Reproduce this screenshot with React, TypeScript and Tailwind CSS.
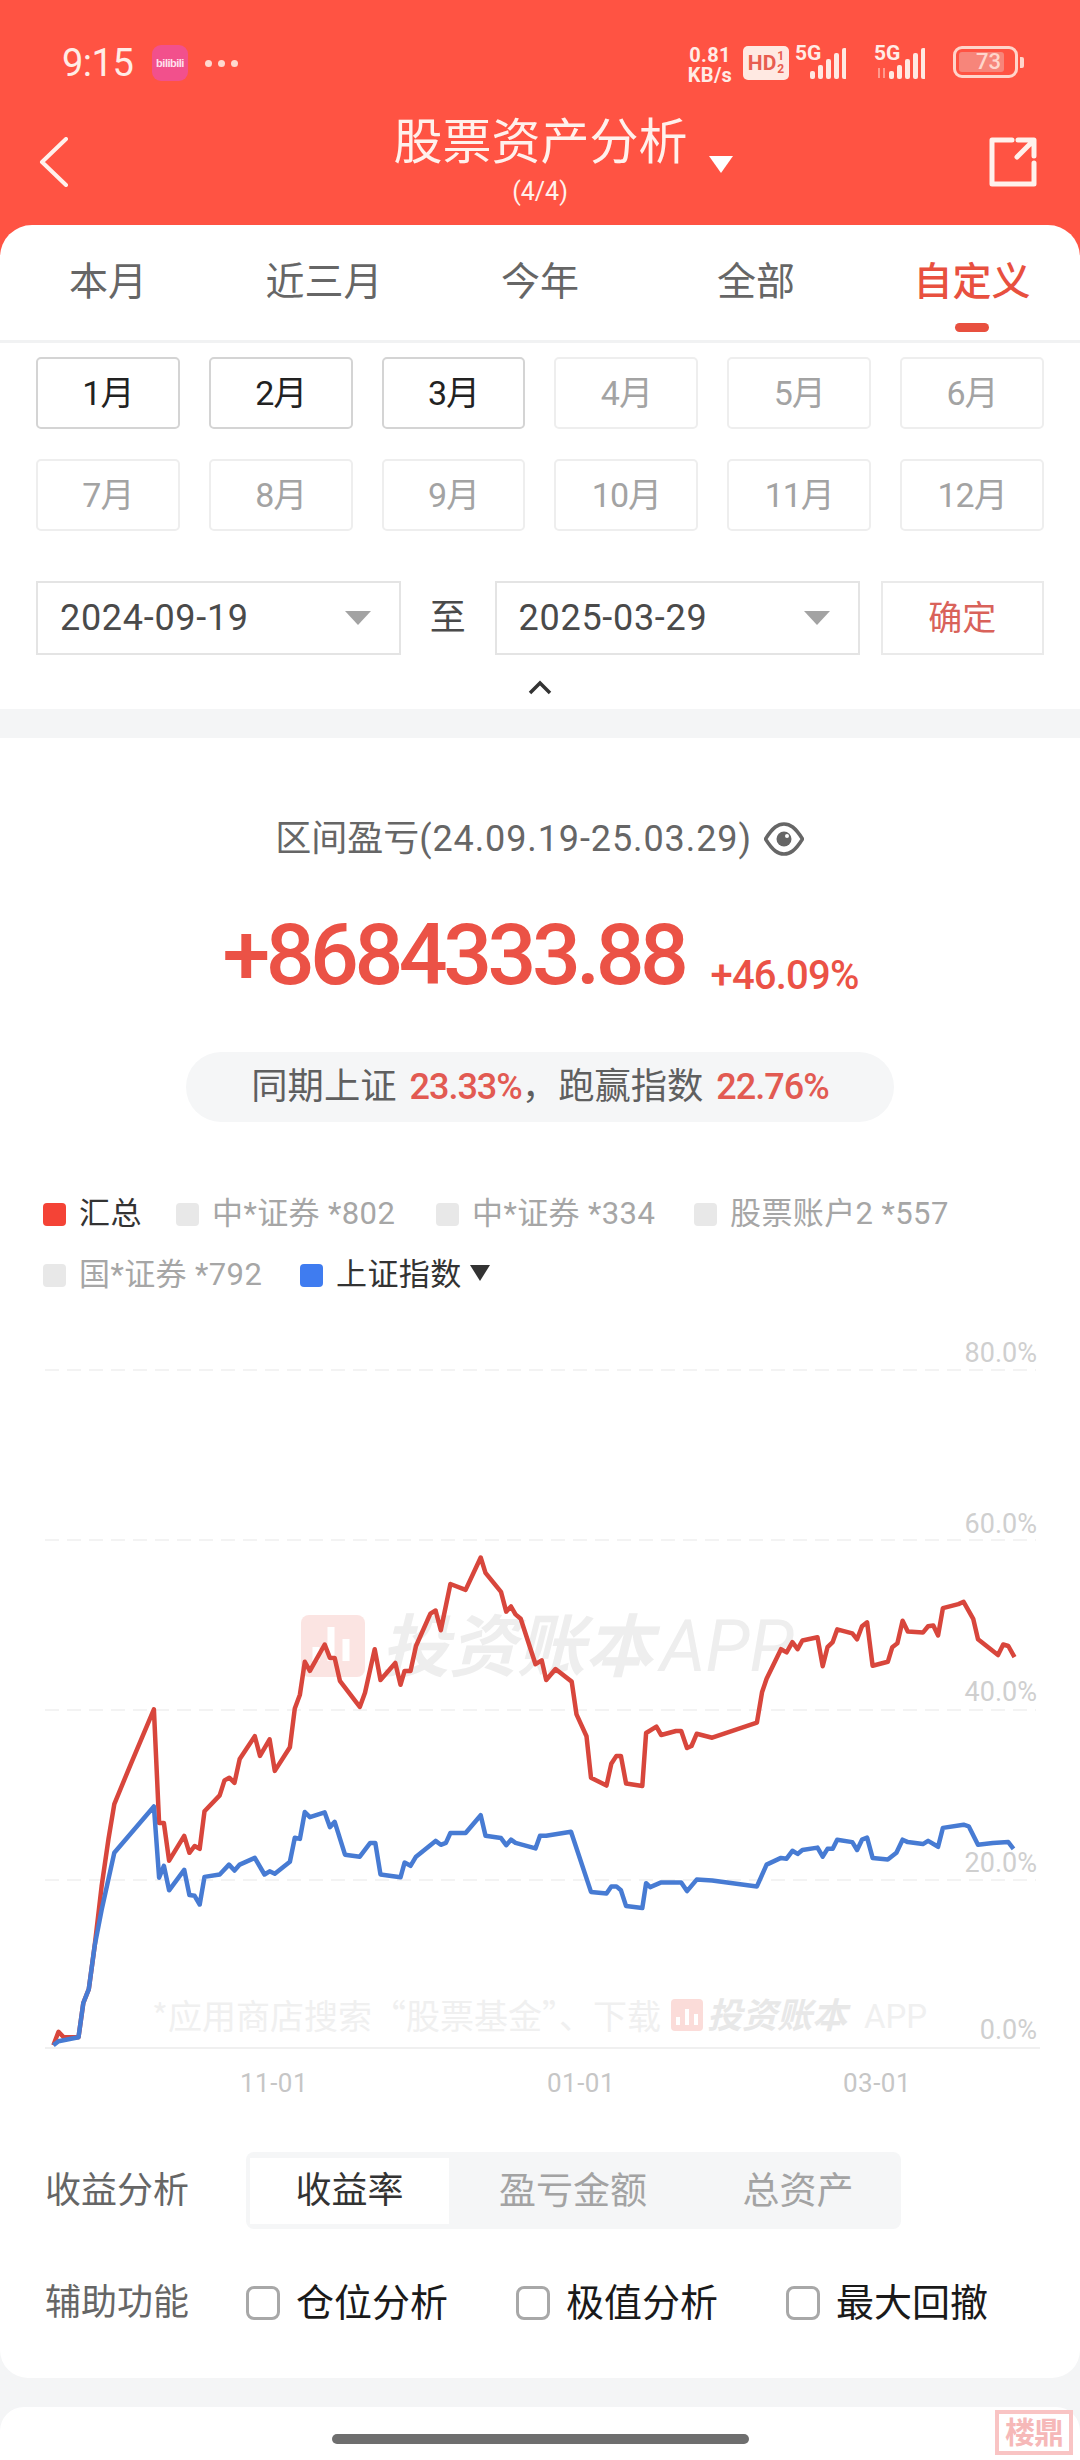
const SANS = "font-[family-name:Roboto,'Noto_Sans_CJK_SC',sans-serif]";

type P = [number, number];
const L = (x: number, y: number): P => [x / 2.904, 1500 + y / 2.53 - 1340];
const R = (x: number, y: number): P => [540 + x / 2.904, 1500 + y / 2.53 - 1340];

const redL: P[] = [[155,1382],[170,1348],[185,1362],[228,1362],[242,1275],[258,1240],[275,1130],[295,980],[315,860],[332,772],[380,670],[447,532],[462,820],[476,820],[491,915],[535,852],[550,895],[565,878],[580,885],[594,790],[638,750],[652,712],[666,705],[681,718],[696,658],[740,600],[755,650],[783,608],[798,688],[842,628],[856,530],[871,495],[885,412],[900,435],[943,368],[958,402],[972,402],[987,460],[1045,526],[1060,490],[1088,380],[1105,458],[1148,415],[1163,470],[1175,435],[1192,435],[1208,372],[1250,290],[1265,282],[1280,332],[1308,215],[1352,230],[1396,148],[1410,187],[1455,235],[1470,285],[1484,272],[1497,292],[1512,303],[1555,418]];
const redR: P[] = [[5,408],[18,458],[45,430],[92,462],[106,545],[135,600],[148,705],[193,725],[207,670],[222,650],[235,650],[250,720],[297,726],[308,592],[338,576],[352,597],[395,587],[410,587],[427,630],[440,625],[455,594],[500,604],[630,566],[645,488],[658,455],[700,380],[716,388],[733,362],[748,380],[762,358],[806,350],[821,423],[835,375],[850,362],[863,330],[907,340],[921,355],[935,322],[950,312],[966,422],[1010,412],[1023,375],[1038,365],[1053,308],[1068,335],[1112,338],[1127,322],[1142,320],[1156,345],[1170,276],[1215,266],[1230,260],[1258,303],[1272,355],[1330,395],[1345,368],[1360,372],[1378,400]];
const blueL: P[] = [[155,1382],[170,1372],[228,1362],[242,1275],[258,1240],[275,1130],[295,1040],[332,895],[447,778],[462,958],[476,928],[491,990],[535,938],[550,1002],[565,1004],[580,1026],[594,956],[638,950],[665,925],[681,940],[696,925],[740,908],[768,950],[783,942],[798,948],[842,918],[856,857],[871,860],[885,792],[900,805],[943,793],[958,830],[972,817],[1002,900],[1045,905],[1075,870],[1090,870],[1105,950],[1163,957],[1175,920],[1192,928],[1208,905],[1265,865],[1280,875],[1295,870],[1308,845],[1352,845],[1396,800],[1410,852],[1455,858],[1470,876],[1484,862],[1497,870],[1555,884]];
const blueR: P[] = [[0,852],[18,852],[90,842],[148,994],[193,998],[207,980],[222,980],[235,990],[250,1030],[297,1035],[308,972],[320,982],[352,970],[410,970],[427,992],[455,963],[500,965],[630,980],[658,925],[700,908],[716,910],[733,890],[748,898],[762,888],[806,882],[821,905],[835,885],[850,885],[863,862],[907,868],[921,888],[935,862],[950,857],[966,908],[1010,912],[1035,895],[1053,862],[1068,868],[1112,873],[1127,865],[1156,880],[1170,832],[1230,824],[1245,828],[1272,875],[1315,870],[1360,868],[1375,885]];
const pts = (a: P[], b: P[]) =>
  [...a.map(([x, y]) => L(x, y)), ...b.map(([x, y]) => R(x, y))].map(([x, y]) => `${x.toFixed(1)},${y.toFixed(1)}`).join(" ");

function Bars({ arrows }: { arrows?: boolean }) {
  const hs = [8, 14, 20, 26, 31];
  return (
    <svg width="50" height="32" viewBox="0 0 50 32" className="block">
      {arrows && <path d="M4 20v10M9 20v10" stroke="#ff9a8e" strokeWidth="2" />}
      {hs.map((h, i) => (
        <rect key={i} x={14 + i * 8} y={31 - h} width="5" height={h} rx="2" fill="#ffe9e2" />
      ))}
    </svg>
  );
}

function StatusBar() {
  return (
    <div className="h-[108px] pt-[42px] pl-[62px] pr-[56px] flex items-start justify-between text-[#ffece6]">
      <div className="flex items-center h-[42px]">
        <span className="text-[38px] leading-[42px] font-[family-name:Roboto,sans-serif] w-[90px] tracking-[-0.5px]">9:15</span>
        <span className="w-[36px] h-[36px] rounded-[9px] bg-[#f2508c] flex items-center justify-center text-[11px] font-bold text-[#ffe2ee] font-[family-name:'Liberation_Sans',sans-serif] tracking-[-0.5px]">bilibili</span>
        <span className="flex gap-[6px] ml-[17px]">
          <i className="block w-[7px] h-[7px] rounded-full bg-[#ffd9cf]" />
          <i className="block w-[7px] h-[7px] rounded-full bg-[#ffd9cf]" />
          <i className="block w-[7px] h-[7px] rounded-full bg-[#ffd9cf]" />
        </span>
      </div>
      <div className="flex items-start h-[42px] pt-[3px] font-[family-name:Roboto,sans-serif] font-bold">
        <div className="w-[50px] -ml-[9px] text-[20px] leading-[20px] flex flex-col items-center tracking-[0.3px]">
          <span>0.81</span>
          <span>KB/s</span>
        </div>
        <div className="ml-[8px] mt-[1px] w-[46px] h-[34px] rounded-[5px] bg-[#ffe9e2] text-[#e85d50] flex items-center justify-center text-[21px] leading-none">
          HD
          <span className="flex flex-col text-[12px] leading-[13px] ml-[1px]"><span>1</span><span>2</span></span>
        </div>
        <div className="relative ml-[6px] mt-[1px] w-[64px] h-[34px]">
          <span className="absolute left-0 top-[-3px] text-[21px] leading-[20px]">5G</span>
          <span className="absolute left-[1px] top-[2px]"><Bars /></span>
        </div>
        <div className="relative ml-[15px] mt-[1px] w-[64px] h-[34px]">
          <span className="absolute left-0 top-[-3px] text-[21px] leading-[20px]">5G</span>
          <span className="absolute left-[1px] top-[2px]"><Bars arrows /></span>
        </div>
        <div className="ml-[15px] mt-[1px] flex items-center h-[32px]">
          <div className="w-[65px] h-[32px] rounded-[9px] border-[3px] border-[#ffd5cb] p-[3px]">
            <div className="w-[45px] h-full rounded-[3px] bg-[#f7857a] flex items-center justify-center text-[22px] leading-none font-medium pl-[14px] text-[#ffd5cb] whitespace-nowrap">73</div>
          </div>
          <div className="w-[4px] h-[11px] ml-[2px] rounded-r-[2px] bg-[#ffd5cb]" />
        </div>
      </div>
    </div>
  );
}

function Header() {
  return (
    <div className="h-[257px] bg-[#ff5343]">
      <StatusBar />
      <div className="relative h-[117px] flex flex-col items-center text-[#fff1ec]">
        <svg width="30" height="50" viewBox="0 0 30 50" fill="none" className="absolute left-[39px] top-[29px]">
          <path d="M27 2 3 25l24 23" stroke="#fff1ec" strokeWidth="4" strokeLinecap="round" strokeLinejoin="round" />
        </svg>
        <div className="pt-[7px] flex items-start ml-[46px]">
          <span className="text-[49px] leading-[56px]">股票资产分析</span>
          <svg width="24" height="17" viewBox="0 0 24 17" className="ml-[21px] mt-[41px]">
            <path d="M0 0h24L12 17z" fill="#fff" />
          </svg>
        </div>
        <span className="text-[25px] leading-[30px] mt-[4px] font-[family-name:Roboto,sans-serif]">(4/4)</span>
        <svg width="50" height="50" viewBox="0 0 50 50" fill="none" className="absolute right-[42px] top-[29px]">
          <path d="M24 3H4v44h42V26M30 3h16v16M45 4 29 20" stroke="#fff1ec" strokeWidth="5" strokeLinecap="round" strokeLinejoin="round" />
        </svg>
      </div>
    </div>
  );
}

function Tabs() {
  const tabs = ["本月", "近三月", "今年", "全部", "自定义"];
  return (
    <div className="h-[118px] border-b-[3px] border-[#f1f2f3] grid grid-cols-5 relative">
      {tabs.map((t, i) => (
        <div key={t} className="relative flex justify-center pt-[32px]">
          <span className={`text-[39px] leading-[50px] ${i === 4 ? "text-[#e8503f] font-medium" : "text-[#666666]"}`}>{t}</span>
          {i === 4 && <span className="absolute top-[98px] left-1/2 -translate-x-1/2 w-[34px] h-[9px] rounded-full bg-[#e8503f]" />}
        </div>
      ))}
    </div>
  );
}

function Months() {
  const m = ["1月","2月","3月","4月","5月","6月","7月","8月","9月","10月","11月","12月"];
  return (
    <div className="mx-[36px] mt-[14px] grid grid-cols-6 gap-x-[29px] gap-y-[30px]">
      {m.map((t, i) => (
        <div key={t} className={`h-[72px] rounded-[5px] border-2 flex items-center justify-center text-[34px] tracking-[-1px] ${i < 3 ? "border-[#d4d4d4] text-[#222222]" : "border-[#eeeeee] text-[#a3a3a3]"}`}>{t}</div>
      ))}
    </div>
  );
}

function DateBox({ v }: { v: string }) {
  return (
    <div className="w-[366px] h-[74px] border-2 border-[#e4e4e4] flex items-center justify-between pl-[22px] pr-[28px]">
      <span className="text-[36px] text-[#4a4a4a] tracking-[0.7px]">{v}</span>
      <svg width="26" height="14" viewBox="0 0 26 14"><path d="M0 0h26L13 14z" fill="#a3a3a3" /></svg>
    </div>
  );
}

function DateRow() {
  return (
    <>
      <div className="mx-[36px] mt-[50px] flex items-center">
        <DateBox v="2024-09-19" />
        <span className="w-[94px] text-center text-[36px] text-[#4a4a4a]">至</span>
        <DateBox v="2025-03-29" />
        <div className="ml-[21px] w-[164px] h-[74px] border-2 border-[#eaeaea] flex items-center justify-center text-[34px] text-[#d9625a]">确定</div>
      </div>
      <div className="h-[54px] flex items-start justify-center pt-[25px]">
        <svg width="24" height="15" viewBox="0 0 24 15" fill="none"><path d="M2 13 12 3l10 10" stroke="#333" strokeWidth="3.5" /></svg>
      </div>
    </>
  );
}

function Summary() {
  return (
    <div className="flex flex-col items-center">
      <div className="mt-[76px] h-[50px] flex items-center text-[#666666] ml-[-1px]">
        <span className="text-[36px] leading-[50px]">区间盈亏<span className="tracking-[0.9px]">(24.09.19-25.03.29)</span></span>
        <svg width="40" height="40" viewBox="0 0 40 40" fill="none" className="ml-[12px]">
          <path d="M1.500 20C9 8 14 5 20 5s11 3 18.500 15C31 32 26 35 20 35S9 32 1.500 20Z" stroke="#666" strokeWidth="3.5" strokeLinejoin="round" />
          <circle cx="20" cy="20" r="7.500" fill="#666" />
          <circle cx="23" cy="17" r="2" fill="#fff" />
        </svg>
      </div>
      <div className="mt-[41px] h-[100px] flex items-end font-[family-name:Roboto,sans-serif] text-[#eb5246] font-medium ml-[1px]">
        <span className="text-[86px] leading-[100px] tracking-[-4.5px]">+8684333.88</span>
        <span className="text-[40px] leading-[58px] ml-[26px] tracking-[-0.8px]">+46.09%</span>
      </div>
      <div className="mt-[47px] w-[708px] h-[70px] rounded-full bg-[#f5f6f7] flex items-center justify-center text-[36.3px] leading-none text-[#5f5f5f]">
        <span>同期上证</span>
        <span className="ml-[13px] text-[#e25a52] text-[36px] tracking-[-1px] font-medium">23.33%</span>
        <span>，</span>
        <span>跑赢指数</span>
        <span className="ml-[13px] text-[#e25a52] text-[36px] tracking-[-1px] font-medium">22.76%</span>
      </div>
    </div>
  );
}

function Lg({ c, t, dark, w }: { c: string; t: string; dark?: boolean; w: string }) {
  return (
    <div className={`flex items-center ${w}`}>
      <i className={`block w-[23px] h-[23px] rounded-[4px] ${c}`} />
      <span className={`ml-[13px] text-[31px] leading-[40px] tracking-[0.4px] whitespace-nowrap ${dark ? "text-[#333333]" : "text-[#a6a6a6]"}`}>{t}</span>
    </div>
  );
}

function Legend() {
  return (
    <div className="mt-[72px] pl-[43px] flex flex-col gap-[21px]">
      <div className="flex h-[40px]">
        <Lg c="bg-[#f44336]" t="汇总" dark w="w-[133px]" />
        <Lg c="bg-[#e8e8e8]" t="中*证券 *802" w="w-[260px]" />
        <Lg c="bg-[#e8e8e8]" t="中*证券 *334" w="w-[258px]" />
        <Lg c="bg-[#e8e8e8]" t="股票账户2 *557" w="w-[300px]" />
      </div>
      <div className="flex h-[40px] items-center">
        <Lg c="bg-[#e8e8e8]" t="国*证券 *792" w="w-[257px]" />
        <Lg c="bg-[#3f7cf0]" t="上证指数" dark w="w-[170px]" />
        <svg width="20" height="20" viewBox="0 0 20 20" className="mt-[-4px]"><path d="M0 2h20L10 18z" fill="#333" /></svg>
      </div>
    </div>
  );
}

function Chart() {
  const gy = [31, 201, 371, 541];
  const labels: [string, number][] = [["80.0%", 13], ["60.0%", 184], ["40.0%", 352], ["20.0%", 523], ["0.0%", 690]];
  const xl: [string, number][] = [["11-01", 274], ["01-01", 581], ["03-01", 877]];
  const f = "Roboto, 'Noto Sans CJK SC', sans-serif";
  return (
    <svg width="1080" height="810" viewBox="0 -20 1080 810" className="block" style={{ fontFamily: f }}>
      <rect x="301" y="276" width="64" height="62" rx="8" fill="#fbe4e2" />
      <path d="M316 322v-14M331 322v-34M346 322v-22" stroke="#fff" strokeWidth="7" />
      <text x="381" y="332" fontSize="68" fontWeight="700" fontStyle="italic" fill="#eeeeee">投资账本</text>
      <text x="660" y="332" fontSize="72" fontStyle="italic" fill="#eeeeee">APP</text>

      <text x="152" y="690" fontSize="34" fill="#f0f0f0" style={{ fontFamily: "'Noto Sans CJK SC', sans-serif" }}>*应用商店搜索“股票基金”、下载</text>
      <rect x="671" y="660" width="32" height="32" rx="4" fill="#fbdcd9" />
      <path d="M678 686v-8M687 686v-16M696 686v-11" stroke="#fff" strokeWidth="4" />
      <text x="707" y="689" fontSize="35" fontWeight="700" fontStyle="italic" fill="#e8e8e8">投资账本</text>
      <text x="864" y="689" fontSize="33" fill="#f0f0f0">APP</text>

      {gy.map((y) => (
        <line key={y} x1="45" x2="1036" y1={y} y2={y} stroke="#f3f3f3" strokeWidth="2" strokeDasharray="14 8" />
      ))}
      <line x1="45" x2="1040" y1="709" y2="709" stroke="#f0f0f0" strokeWidth="2" />

      <polyline points={pts(redL, redR)} fill="none" stroke="#d8463c" strokeWidth="4.500" strokeLinejoin="round" />
      <polyline points={pts(blueL, blueR)} fill="none" stroke="#477bd3" strokeWidth="4.500" strokeLinejoin="round" />

      {labels.map(([t, y]) => (
        <text key={t} x="1037" y={y} dy="10" textAnchor="end" fontSize="27" fill="#cfcfcf">{t}</text>
      ))}
      {xl.map(([t, x]) => (
        <text key={t} x={x} y="753" textAnchor="middle" fontSize="26" fill="#c6c6c6" letterSpacing="0.5">{t}</text>
      ))}
    </svg>
  );
}

function Controls() {
  const checks = ["仓位分析", "极值分析", "最大回撤"];
  return (
    <div className="pl-[45px]">
      <div className="flex items-center h-[77px] mt-[23px]">
        <span className="w-[201px] text-[36px] text-[#666666]">收益分析</span>
        <div className="w-[655px] h-[77px] rounded-[8px] bg-[#f5f6f7] pl-[4px] pt-[6px]">
          <div className="flex h-[66px] text-[37px] leading-none">
            <div className="w-[199px] bg-white flex items-center justify-center text-[#333333] text-[36px]">收益率</div>
            <div className="w-[248px] flex items-center justify-center text-[#a3a3a3]">盈亏金额</div>
            <div className="w-[202px] flex items-center justify-center text-[#a3a3a3]">总资产</div>
          </div>
        </div>
      </div>
      <div className="flex items-center h-[40px] mt-[54px]">
        <span className="w-[201px] text-[36px] text-[#666666]">辅助功能</span>
        {checks.map((c) => (
          <div key={c} className="w-[270px] flex items-center">
            <i className="block w-[34px] h-[34px] rounded-[8px] border-[3px] border-[#a8a8a8]" />
            <span className="ml-[16px] text-[38px] leading-none text-[#1a1a1a]">{c}</span>
          </div>
        ))}
      </div>
    </div>
  );
}

export default function App() {
  return (
    <div className={`relative w-[1080px] h-[2460px] overflow-hidden bg-[#f4f5f6] ${SANS}`}>
      <Header />
      <div className="relative -mt-[32px] bg-white rounded-t-[32px]">
        <Tabs />
        <Months />
        <DateRow />
      </div>
      <div className="mt-[29px] h-[1640px] bg-white rounded-b-[28px] overflow-hidden">
        <Summary />
        <Legend />
        <div className="mt-[24px]">
          <Chart />
        </div>
        <Controls />
      </div>
      <div className="mt-[29px] h-[60px] bg-white rounded-t-[24px] flex justify-center pt-[27px]">
        <div className="w-[417px] h-[10px] rounded-full bg-[#6e6e6e]" />
      </div>
      <div className="absolute left-[995px] top-[2410px] w-[78px] h-[45px] border-[4px] border-[#f9c4c4] flex items-center justify-center text-[30px] leading-none text-[#f6b8b8] font-bold bg-[#fff] tracking-[-1px] overflow-hidden">楼鼎</div>
    </div>
  );
}
